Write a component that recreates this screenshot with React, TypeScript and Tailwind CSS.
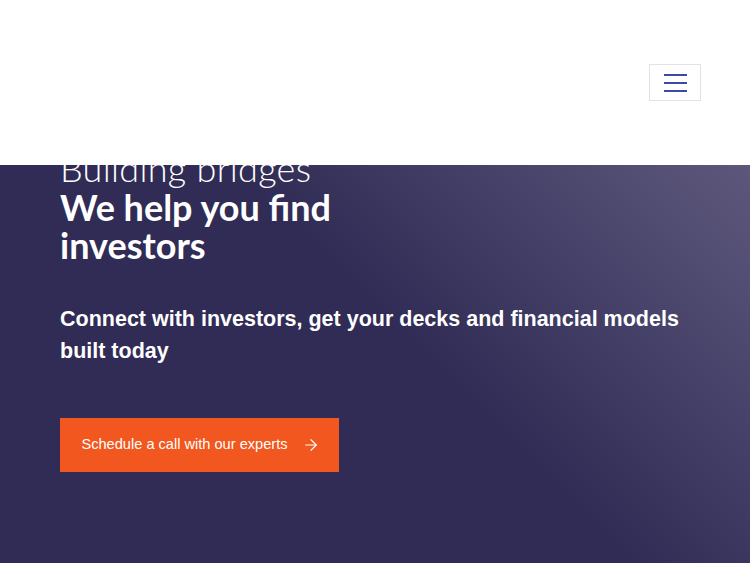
import { ArrowRight } from 'lucide-react'

function Header() {
  return (
    <header className="fixed inset-x-0 top-0 z-10 h-[165px] bg-white">
      <div className="flex h-full items-start justify-end pr-[49px] pt-[64px]">
        <button
          aria-label="Menu"
          className="flex h-[37px] w-[52px] flex-col items-center justify-center gap-[6px] border border-[#e6e0e6] bg-white"
        >
          <span className="block h-[2px] w-[23px] bg-[#3d4aa3]" />
          <span className="block h-[2px] w-[23px] bg-[#3d4aa3]" />
          <span className="block h-[2px] w-[23px] bg-[#3d4aa3]" />
        </button>
      </div>
    </header>
  )
}

export default function App() {
  return (
    <div className="min-h-[563px] bg-[#312c55]">
      <Header />
      <section className="min-h-[563px] bg-[linear-gradient(225deg,#6b6685_0%,#4f4a70_25%,#312c55_52%,#312c55_100%)] px-[60px] pb-[90px] pt-[149px] text-white">
        <h1 className="font-['Lato',sans-serif] text-[36px] leading-[38px]">
          <span className="block font-light tracking-[0.3px]">Building bridges</span>
          <span className="mt-[1px] block font-bold">
            We help you find
            <br />
            investors
          </span>
        </h1>
        <p className="mt-[39px] max-w-[650px] font-['Liberation_Sans',Arial,sans-serif] text-[21.5px] font-bold leading-[32px]">
          Connect with investors, get your decks and financial models built today
        </p>
        <button className="mt-[51px] flex h-[54px] w-[279px] items-center justify-center gap-[14px] bg-[#f1571e] pl-[2px] font-['Liberation_Sans',Arial,sans-serif] text-[14.6px] text-white">
          Schedule a call with our experts
          <ArrowRight size={18} strokeWidth={1.5} />
        </button>
      </section>
    </div>
  )
}
